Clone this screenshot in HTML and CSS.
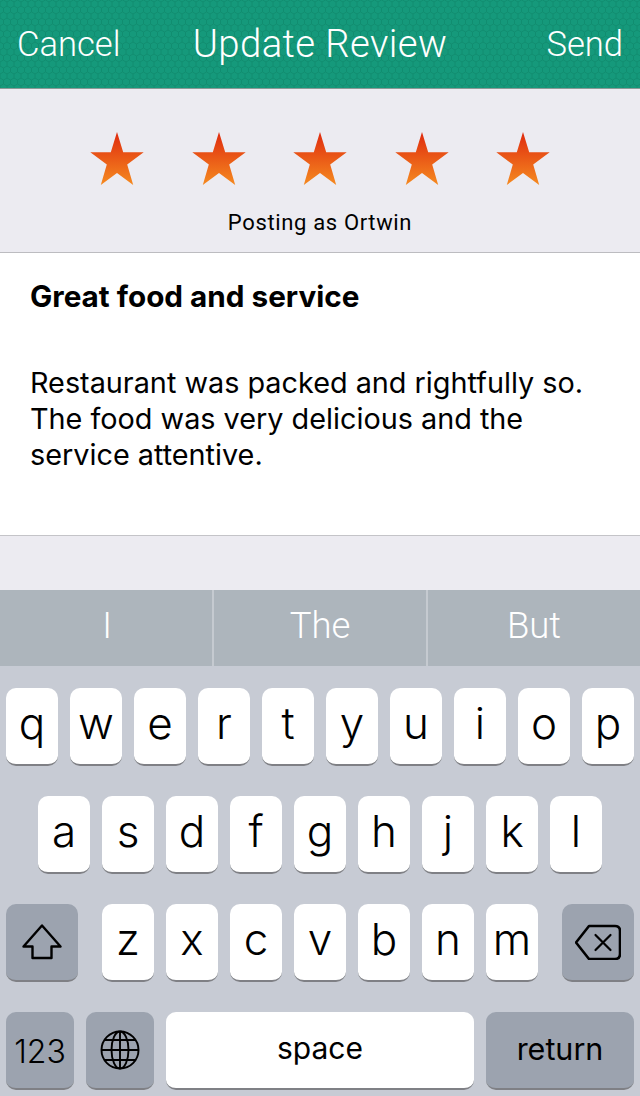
FILE: index.html
```html
<!DOCTYPE html>
<html lang="en">
<head>
    <meta charset="UTF-8">
    <title>Update Review</title>
    <link rel="stylesheet" href="styles.css">
</head>

<body>
    <svg class="defs" width="0" height="0">
        <defs>
            <linearGradient id="starFill" x1="0" y1="0" x2="0" y2="1">
                <stop offset="0" stop-color="#df2a0e"/>
                <stop offset="1" stop-color="#f58a20"/>
            </linearGradient>
            <symbol id="star" viewBox="0 0 54 54">
                <path d="M27 0 L33.2 20.3 L53.7 20.3 L37.2 32.5 L43.2 53 L27 41 L10.8 53 L16.8 32.5 L0.3 20.3 L20.8 20.3 Z" fill="url(#starFill)"/>
            </symbol>
        </defs>
    </svg>

    <header class="nav">
        <span class="nav-btn">Cancel</span>
        <h1 class="nav-title">Update Review</h1>
        <span class="nav-btn send">Send</span>
    </header>

    <section class="rating">
        <div class="stars">
            <svg class="star"><use href="#star"/></svg>
            <svg class="star"><use href="#star"/></svg>
            <svg class="star"><use href="#star"/></svg>
            <svg class="star"><use href="#star"/></svg>
            <svg class="star"><use href="#star"/></svg>
        </div>
        <p class="posting">Posting as Ortwin</p>
    </section>

    <section class="review">
        <h2 class="review-title">Great food and service</h2>
        <p class="review-body">Restaurant was packed and rightfully so.<br>The food was very delicious and the<br>service attentive.</p>
    </section>

    <div class="spacer"></div>

    <div class="suggestions">
        <span>I</span>
        <span>The</span>
        <span>But</span>
    </div>

    <div class="keyboard">
        <div class="row">
            <span class="key">q</span><span class="key">w</span><span class="key">e</span><span class="key">r</span><span class="key">t</span><span class="key">y</span><span class="key">u</span><span class="key">i</span><span class="key">o</span><span class="key">p</span>
        </div>
        <div class="row">
            <span class="key">a</span><span class="key">s</span><span class="key">d</span><span class="key">f</span><span class="key">g</span><span class="key">h</span><span class="key">j</span><span class="key">k</span><span class="key">l</span>
        </div>
        <div class="row">
            <span class="key dark shift">
                <svg width="40" height="36" viewBox="0 0 40 36" fill="none" stroke="#000" stroke-width="2.4" stroke-linejoin="round">
                    <path d="M20 1.5 L38.5 22.5 H29.5 V34 H10.5 V22.5 H1.5 Z"/>
                </svg>
            </span>
            <span class="letters">
                <span class="key">z</span><span class="key">x</span><span class="key">c</span><span class="key">v</span><span class="key">b</span><span class="key">n</span><span class="key">m</span>
            </span>
            <span class="key dark shift">
                <svg width="46" height="36" viewBox="0 0 46 36" fill="none" stroke="#000" stroke-width="2.6" stroke-linejoin="round" stroke-linecap="round">
                    <path d="M14 2 H40 Q45 2 45 7 V30 Q45 35 40 35 H14 L1 18.5 Z"/>
                    <path d="M20.5 11 L35.5 26 M35.5 11 L20.5 26" stroke-width="2.2"/>
                </svg>
            </span>
        </div>
        <div class="row">
            <span class="key dark small num">123</span>
            <span class="key dark small">
                <svg width="40" height="40" viewBox="0 0 40 40" fill="none" stroke="#000" stroke-width="1.9">
                    <circle cx="20" cy="20" r="18.5"/>
                    <ellipse cx="20" cy="20" rx="8.5" ry="18.5"/>
                    <path d="M20 1.5 V38.5 M1.5 20 H38.5 M4.5 10 H35.5 M4.5 30 H35.5"/>
                </svg>
            </span>
            <span class="key space">space</span>
            <span class="key dark wide">return</span>
        </div>
    </div>
</body>
</html>
```

FILE: styles.css
```css
* {
    box-sizing: border-box;
}

html, body {
    margin: 0;
    padding: 0;
}

body {
    width: 640px;
    height: 1096px;
    overflow: hidden;
    background: #ecebf1;
    font-family: 'Inter', 'Roboto', sans-serif;
    color: #000;
}

.defs {
    display: block;
    height: 0;
}

.nav {
    height: 89px;
    display: grid;
    grid-template-columns: 1fr auto 1fr;
    align-items: center;
    padding: 0 17px;
    background-color: #15997b;
    /* honeycomb texture */
    background-image: url("data:image/svg+xml,%3Csvg xmlns='http://www.w3.org/2000/svg' width='7' height='12'%3E%3Cpath d='M3.5 0L7 2V6L3.5 8L0 6V2ZM3.5 8V12' fill='none' stroke='%23118d70' stroke-width='1'/%3E%3C/svg%3E");
    background-size: 7px 12px;
    border-bottom: 1px solid #8a9a96;
    color: #fff;
}

.nav-btn {
    font-family: 'Roboto', sans-serif;
    font-weight: 300;
    font-size: 34.6px;
}

.send {
    justify-self: end;
}

.nav-title {
    margin: 0 0 2px;
    font-family: 'Roboto', sans-serif;
    font-weight: 300;
    font-size: 38.3px;
    letter-spacing: 0.4px;
}

.rating {
    height: 164px;
    padding-top: 43px;
    border-bottom: 1px solid #bcbcc0;
    text-align: center;
}

.stars {
    display: flex;
    justify-content: center;
    gap: 47.5px;
}

.star {
    width: 54px;
    height: 54px;
}

.posting {
    margin: 23px 0 0;
    font-size: 22px;
    line-height: 28px;
    font-family: 'Roboto', sans-serif;
    letter-spacing: 0.65px;
}

.review {
    height: 283px;
    padding: 25px 30px 0;
    background: #fff;
    border-bottom: 1px solid #c4c4c8;
}

.review-title {
    margin: 0 0 51px;
    font-size: 29.7px;
    line-height: 36px;
    font-weight: 700;
}

.review-body {
    margin: 0;
    font-size: 28.8px;
    line-height: 36px;
}

.spacer {
    height: 54px;
}

.suggestions {
    height: 76px;
    display: grid;
    grid-template-columns: 212px 214px 214px;
    background: #adb5bc;
    color: #fff;
}

.suggestions span {
    display: flex;
    align-items: center;
    justify-content: center;
    padding-bottom: 6px;
    font-family: 'Roboto', sans-serif;
    font-weight: 300;
    font-size: 36.5px;
    border-left: 2px solid #c5cad0;
}

.suggestions span:first-child {
    border-left: none;
    padding-left: 2px;
}

.keyboard {
    height: 430px;
    padding-top: 22px;
    background: #c7cbd4;
}

.row {
    height: 76px;
    margin-bottom: 32px;
    display: flex;
    justify-content: center;
    gap: 12px;
}

.letters {
    display: flex;
    gap: 12px;
    margin: 0 12px;
}

.key {
    width: 52px;
    height: 78px;
    padding-bottom: 6px;
    display: flex;
    align-items: center;
    justify-content: center;
    background: #fff;
    border-radius: 10px;
    border-bottom: 2px solid #7f8085;
    font-family: 'Inter', sans-serif;
    font-weight: 300;
    font-size: 44px;
}

.dark {
    background: #9ca3af;
    padding-bottom: 0;
}

.shift {
    width: 72px;
}

.small {
    width: 68px;
}

.num {
    padding-top: 2px;
    font-size: 32px;
}

.space {
    width: 308px;
    padding-bottom: 4px;
    font-weight: 400;
    font-size: 30px;
}

.wide {
    width: 148px;
    padding-bottom: 4px;
    font-weight: 400;
    font-size: 30.5px;
}
```
